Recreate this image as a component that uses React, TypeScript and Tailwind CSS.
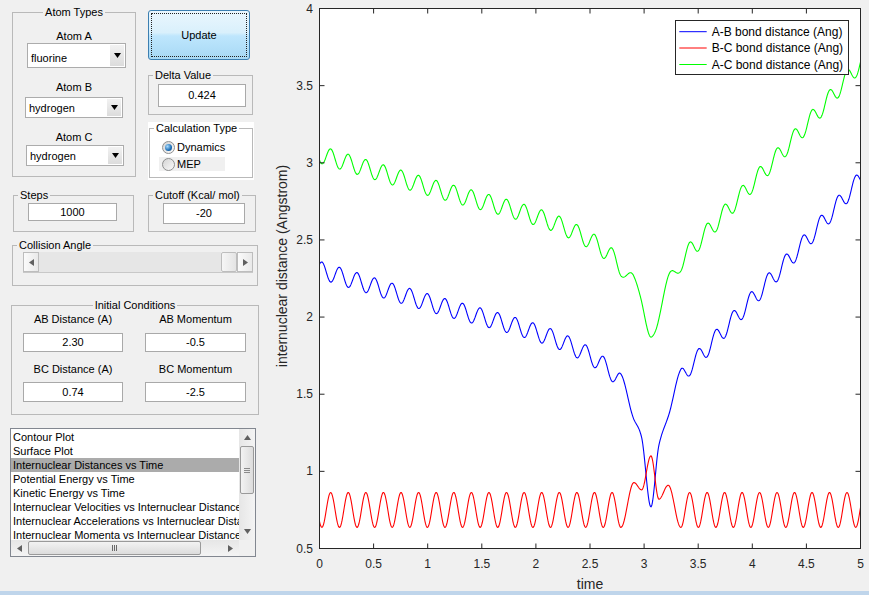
import React from 'react';

// ---------- data for the plot ----------
type Pt = [number, number];

const LO = 0.637;
const HI = 0.863;

// extrema of the B-C distance, joined by half cosines
function bcExtrema(): Pt[] {
  const P = 0.16253;
  const pts: Pt[] = [[0.022 - P / 2, HI]];
  for (let k = 0; k <= 17; k++) {
    const t = 0.022 + k * P;
    pts.push([t, LO]);
    if (k < 17) pts.push([t + P / 2, HI]);
  }
  pts.push([2.906, 0.927], [2.977, 0.88], [3.063, 1.1], [3.137, 0.82], [3.223, 0.91]);
  const P2 = 0.1616;
  for (let k = 0; k <= 11; k++) {
    const t = 3.34 + k * P2;
    pts.push([t, LO], [t + P2 / 2, HI]);
  }
  return pts;
}

function cosInterp(pts: Pt[], t: number) {
  let i = 0;
  while (i < pts.length - 2 && pts[i + 1][0] < t) i++;
  const [t0, v0] = pts[i];
  const [t1, v1] = pts[i + 1];
  const f = Math.min(1, Math.max(0, (t - t0) / (t1 - t0)));
  return v0 + ((v1 - v0) * (1 - Math.cos(Math.PI * f))) / 2;
}

// monotone cubic through the keys (distance from A to the middle of B-C)
function monotone(pts: Pt[]) {
  const n = pts.length;
  const d: number[] = [];
  const m: number[] = [];
  for (let i = 0; i < n - 1; i++) d[i] = (pts[i + 1][1] - pts[i][1]) / (pts[i + 1][0] - pts[i][0]);
  m[0] = d[0];
  m[n - 1] = d[n - 2];
  for (let i = 1; i < n - 1; i++) m[i] = d[i - 1] * d[i] <= 0 ? 0 : (d[i - 1] + d[i]) / 2;
  for (let i = 0; i < n - 1; i++) {
    if (d[i] === 0) {
      m[i] = 0;
      m[i + 1] = 0;
      continue;
    }
    const a = m[i] / d[i];
    const b = m[i + 1] / d[i];
    const s = a * a + b * b;
    if (s > 9) {
      const tau = 3 / Math.sqrt(s);
      m[i] = tau * a * d[i];
      m[i + 1] = tau * b * d[i];
    }
  }
  return (t: number) => {
    let i = 0;
    while (i < n - 2 && pts[i + 1][0] < t) i++;
    const [x0, y0] = pts[i];
    const [x1, y1] = pts[i + 1];
    const h = x1 - x0;
    const s = (t - x0) / h;
    const h00 = 2 * s ** 3 - 3 * s ** 2 + 1;
    const h10 = s ** 3 - 2 * s ** 2 + s;
    const h01 = -2 * s ** 3 + 3 * s ** 2;
    const h11 = s ** 3 - s ** 2;
    return h00 * y0 + h10 * h * m[i] + h01 * y1 + h11 * h * m[i + 1];
  };
}

const DKEYS: Pt[] = [
  [0, 2.68], [1.0, 2.47], [2.13, 2.245], [2.285, 2.2], [2.61, 2.07], [2.785, 1.95],
  [2.906, 1.8], [2.977, 1.66], [3.063, 1.32], [3.137, 1.58], [3.223, 1.81], [3.34, 1.98],
  [3.5, 2.11], [4, 2.49], [4.5, 2.87], [5, 3.27],
];

const sx = (t: number) => 49.5 + t * 108.2;
const sy = (v: number) => 548.5 - (v - 0.5) * (540 / 3.5);

function buildPaths() {
  const ext = bcExtrema();
  const D = monotone(DKEYS);
  let ab = '';
  let bc = '';
  let ac = '';
  for (let i = 0; i <= 1250; i++) {
    const t = i * 0.004;
    const r = cosInterp(ext, t);
    const dd = D(t);
    const cmd = i === 0 ? 'M' : 'L';
    const x = sx(t).toFixed(2);
    ab += `${cmd}${x} ${sy(dd - r / 2).toFixed(2)}`;
    bc += `${cmd}${x} ${sy(r).toFixed(2)}`;
    ac += `${cmd}${x} ${sy(dd + r / 2).toFixed(2)}`;
  }
  return { ab, bc, ac };
}

// ---------- small GUI pieces ----------
function Tri({ dir, size = 7, color = '#000' }: { dir: 'up' | 'down' | 'left' | 'right'; size?: number; color?: string }) {
  const h = Math.round(size / 2) + 1;
  const pts =
    dir === 'down'
      ? `0,0 ${size},0 ${size / 2},${h}`
      : dir === 'up'
        ? `0,${h} ${size},${h} ${size / 2},0`
        : dir === 'left'
          ? `${h},0 ${h},${size} 0,${size / 2}`
          : `0,0 0,${size} ${h},${size / 2}`;
  const w = dir === 'up' || dir === 'down' ? size : h;
  const hh = dir === 'up' || dir === 'down' ? h : size;
  return (
    <svg width={w} height={hh} viewBox={`0 0 ${w} ${hh}`}>
      <polygon points={pts} fill={color} />
    </svg>
  );
}

function Group({
  title,
  className = '',
  center = false,
  children,
}: {
  title: string;
  className?: string;
  center?: boolean;
  children?: React.ReactNode;
}) {
  return (
    <fieldset className={`border border-[#b9b9b9] ${className}`}>
      <legend className={`px-[2px] leading-[13px] ${center ? 'mx-auto' : 'ml-[4px]'}`}>{title}</legend>
      {children}
    </fieldset>
  );
}

function Popup({ value, className = '', textPad = 'pt-[2px]' }: { value: string; className?: string; textPad?: string }) {
  return (
    <div className={`flex bg-white border border-[#acacac] ${className}`}>
      <span className={`flex-1 flex items-center pl-[3px] ${textPad}`}>{value}</span>
      <span className="w-[14px] my-[1px] mr-[1px] flex items-center justify-center bg-[linear-gradient(#f2f2f2,#dcdcdc)]">
        <Tri dir="down" size={7} />
      </span>
    </div>
  );
}

function Edit({ value, className = '' }: { value: string; className?: string }) {
  return (
    <div className={`flex items-center justify-center bg-white border border-[#a9a9a9] ${className}`}>{value}</div>
  );
}

function Radio({ checked }: { checked?: boolean }) {
  return (
    <span className="w-[13px] h-[13px] rounded-full border border-[#8e8f8f] bg-[linear-gradient(135deg,#d4d4d4,#fafafa)] flex items-center justify-center">
      {checked && (
        <span className="w-[7px] h-[7px] rounded-full bg-[radial-gradient(circle_at_35%_35%,#a8dcff,#1c6db5_60%,#0b3f75)]" />
      )}
    </span>
  );
}

function ScrollBtn({ dir, className = '' }: { dir: 'up' | 'down' | 'left' | 'right'; className?: string }) {
  return (
    <div className={`flex items-center justify-center ${className}`}>
      <Tri dir={dir} size={7} color="#606060" />
    </div>
  );
}

const ITEMS = [
  'Contour Plot',
  'Surface Plot',
  'Internuclear Distances vs Time',
  'Potential Energy vs Time',
  'Kinetic Energy vs Time',
  'Internuclear Velocities vs Internuclear Distances',
  'Internuclear Accelerations vs Internuclear Distances',
  'Internuclear Momenta vs Internuclear Distances',
];

function ControlPanel() {
  return (
    <div className="w-[270px] flex-none">
      {/* atoms + update column */}
      <div className="flex items-start">
        <Group title="Atom Types" center className="ml-[12px] mt-[6px] w-[124px] h-[171px] flex-none">
          <div className="mt-[11px] text-center leading-[13px]">Atom A</div>
          <Popup value="fluorine" textPad="pt-[5px]" className="ml-[14px] w-[99px] h-[25px]" />
          <div className="mt-[13px] text-center leading-[13px]">Atom B</div>
          <Popup value="hydrogen" className="mt-[3px] ml-[12px] w-[98px] h-[21px]" />
          <div className="mt-[13px] text-center leading-[13px]">Atom C</div>
          <Popup value="hydrogen" className="mt-[1px] ml-[13px] w-[98px] h-[21px]" />
        </Group>

        <div className="ml-[12px] w-[108px] flex-none">
          <button className="block mt-[10px] w-[102px] h-[50px] rounded-[3px] border border-[#3c7fb1] bg-[linear-gradient(#eaf6fd_0%,#d9f0fc_45%,#bee6fd_52%,#a7d9f5_100%)] p-[2px]">
            <div className="w-full h-full border border-dotted border-[#222] flex items-center justify-center">Update</div>
          </button>
          <Group title="Delta Value" className="mt-[9px] w-[105px] h-[46px]">
            <Edit value="0.424" className="mt-[2px] ml-[9px] w-[88px] h-[23px]" />
          </Group>
          <div className="mt-[7px] w-[106px] h-[58px] bg-white">
            <Group title="Calculation Type" className="ml-[1px] w-[104px] h-[56px]">
              <div className="mt-[5px] ml-[9px] w-[66px] h-[14px] flex items-center">
                <span className="ml-[3px]">
                  <Radio checked />
                </span>
                <span className="ml-[2px]">Dynamics</span>
              </div>
              <div className="mt-[3px] ml-[9px] w-[66px] h-[14px] flex items-center bg-[#f0f0f0]">
                <span className="ml-[3px]">
                  <Radio />
                </span>
                <span className="ml-[2px]">MEP</span>
              </div>
            </Group>
          </div>
        </div>
      </div>

      {/* steps / cutoff */}
      <div className="flex mt-[9px]">
        <Group title="Steps" className="ml-[13px] w-[121px] h-[43px] flex-none">
          <Edit value="1000" className="mt-[1px] ml-[14px] w-[89px] h-[18px]" />
        </Group>
        <Group title="Cutoff (Kcal/ mol)" className="ml-[14px] w-[108px] h-[43px] flex-none">
          <Edit value="-20" className="mt-[1px] ml-[14px] w-[82px] h-[21px]" />
        </Group>
      </div>

      {/* collision angle */}
      <Group title="Collision Angle" className="mt-[7px] ml-[12px] w-[246px] h-[47px]">
        <div className="ml-[10px] w-[230px] h-[21px] flex border-b border-[#c8c8c8]">
          <ScrollBtn dir="left" className="w-[16px] border border-[#bdbdbd] bg-[linear-gradient(90deg,#fbfbfb,#e9e9e9)]" />
          <div className="flex-1 bg-[#e6e6e6]" />
          <div className="w-[16px] border border-[#bdbdbd] rounded-[2px] bg-[linear-gradient(90deg,#f6f6f6,#e4e4e4)]" />
          <ScrollBtn dir="right" className="w-[16px] border border-[#bdbdbd] bg-[linear-gradient(90deg,#fbfbfb,#e9e9e9)]" />
        </div>
      </Group>

      {/* initial conditions */}
      <Group title="Initial Conditions" center className="mt-[13px] ml-[11px] w-[248px] h-[116px]">
        <div className="flex mt-[1px]">
          <div className="ml-[11px] w-[100px]">
            <div className="text-center leading-[13px]">AB Distance (A)</div>
            <Edit value="2.30" className="mt-[7px] h-[19px]" />
            <div className="mt-[11px] text-center leading-[13px]">BC Distance (A)</div>
            <Edit value="0.74" className="mt-[6px] h-[20px]" />
          </div>
          <div className="ml-[22px] w-[101px]">
            <div className="text-center leading-[13px]">AB Momentum</div>
            <Edit value="-0.5" className="mt-[7px] h-[19px]" />
            <div className="mt-[11px] text-center leading-[13px]">BC Momentum</div>
            <Edit value="-2.5" className="mt-[6px] h-[20px]" />
          </div>
        </div>
      </Group>

      {/* plot selection list */}
      <div className="mt-[13px] ml-[10px] w-[246px] h-[129px] border border-[#828790] bg-white flex flex-col">
        <div className="flex h-[111px]">
          <div className="flex-1 overflow-hidden pt-[1px]">
            {ITEMS.map((it, i) => (
              <div
                key={it}
                className={`h-[14px] leading-[14px] pl-[2px] whitespace-nowrap overflow-hidden ${i === 2 ? 'bg-[#ababab]' : ''}`}
              >
                {it}
              </div>
            ))}
          </div>
          <div className="w-[16px] flex flex-col bg-[linear-gradient(90deg,#e6e6e6,#f4f4f4)]">
            <ScrollBtn dir="up" className="h-[17px]" />
            <div className="mx-[1px] h-[48px] rounded-[2px] border border-[#9a9a9a] bg-[linear-gradient(90deg,#f3f3f3,#dcdcdc)] flex flex-col items-center justify-center gap-[1px]">
              <div className="w-[6px] h-px bg-[#8a8a8a]" />
              <div className="w-[6px] h-px bg-[#8a8a8a]" />
              <div className="w-[6px] h-px bg-[#8a8a8a]" />
            </div>
            <div className="flex-1" />
            <ScrollBtn dir="down" className="h-[17px]" />
          </div>
        </div>
        <div className="flex h-[16px]">
          <div className="flex-1 flex bg-[linear-gradient(#e6e6e6,#f4f4f4)]">
            <ScrollBtn dir="left" className="w-[17px]" />
            <div className="w-[173px] my-[1px] rounded-[2px] border border-[#9a9a9a] bg-[linear-gradient(#f3f3f3,#dcdcdc)] flex items-center justify-center gap-[1px]">
              <div className="w-px h-[6px] bg-[#6a6a6a]" />
              <div className="w-px h-[6px] bg-[#6a6a6a]" />
              <div className="w-px h-[6px] bg-[#6a6a6a]" />
            </div>
            <div className="flex-1" />
            <ScrollBtn dir="right" className="w-[17px]" />
          </div>
          <div className="w-[16px] bg-[#f0f0f0]" />
        </div>
      </div>
    </div>
  );
}

const FONT = 'Liberation Sans, Arial, sans-serif';
const AX = '#262626';

function Chart() {
  const { ab, bc, ac } = buildPaths();
  const xt = Array.from({ length: 11 }, (_, i) => i * 0.5);
  const yt = Array.from({ length: 8 }, (_, i) => 0.5 + i * 0.5);
  const legend = [
    { c: '#0000ff', t: 'A-B bond distance (Ang)', y: 31.7 },
    { c: '#ff0000', t: 'B-C bond distance (Ang)', y: 48 },
    { c: '#00ff00', t: 'A-C bond distance (Ang)', y: 64.5 },
  ];
  return (
    <svg width={599} height={591} viewBox="0 0 599 591" className="flex-none">
      <defs>
        <clipPath id="plotArea">
          <rect x={49.5} y={8.5} width={541} height={540} />
        </clipPath>
      </defs>
      <rect x={49.5} y={8.5} width={541} height={540} fill="#ffffff" />
      <g clipPath="url(#plotArea)" fill="none" strokeWidth={1.1}>
        <path d={ac} stroke="#00ff00" />
        <path d={ab} stroke="#0000ff" />
        <path d={bc} stroke="#ff0000" />
      </g>
      <rect x={49.5} y={8.5} width={541} height={540} fill="none" stroke={AX} strokeWidth={1} />
      <g stroke={AX} strokeWidth={1}>
        {xt.map((t) => (
          <g key={`x${t}`}>
            <line x1={sx(t)} x2={sx(t)} y1={548.5} y2={543.5} />
            <line x1={sx(t)} x2={sx(t)} y1={8.5} y2={13.5} />
          </g>
        ))}
        {yt.map((v) => (
          <g key={`y${v}`}>
            <line x1={49.5} x2={54.5} y1={sy(v)} y2={sy(v)} />
            <line x1={590.5} x2={585.5} y1={sy(v)} y2={sy(v)} />
          </g>
        ))}
      </g>
      <g fontFamily={FONT} fontSize={12} fill={AX}>
        {xt.map((t) => (
          <text key={`xl${t}`} x={sx(t)} y={564} textAnchor="middle" dominantBaseline="central">
            {t}
          </text>
        ))}
        {yt.map((v) => (
          <text key={`yl${v}`} x={43} y={sy(v)} textAnchor="end" dominantBaseline="central">
            {v}
          </text>
        ))}
      </g>
      <text x={320} y={584} fontFamily={FONT} fontSize={14} fill={AX} textAnchor="middle" dominantBaseline="central">
        time
      </text>
      <text
        x={11.5}
        y={266}
        transform="rotate(-90 11.5 266)"
        fontFamily={FONT}
        fontSize={14}
        fill={AX}
        textAnchor="middle"
        dominantBaseline="central"
      >
        internuclear distance (Angstrom)
      </text>
      <rect x={405.5} y={20.5} width={173} height={54} fill="#ffffff" stroke={AX} strokeWidth={1} />
      {legend.map((l) => (
        <g key={l.t}>
          <line x1={409.3} x2={436.7} y1={l.y} y2={l.y} stroke={l.c} strokeWidth={1} />
          <text x={441.7} y={l.y} fontFamily={FONT} fontSize={12} fill="#000" dominantBaseline="central">
            {l.t}
          </text>
        </g>
      ))}
    </svg>
  );
}

export default function App() {
  return (
    <div className="w-[869px] h-[595px] bg-[#f0f0f0] overflow-hidden flex flex-col font-['Liberation_Sans',Arial,sans-serif] text-[11px] text-black">
      <div className="flex h-[591px]">
        <ControlPanel />
        <Chart />
      </div>
      <div className="h-[4px] bg-[#bfd5eb]" />
    </div>
  );
}
